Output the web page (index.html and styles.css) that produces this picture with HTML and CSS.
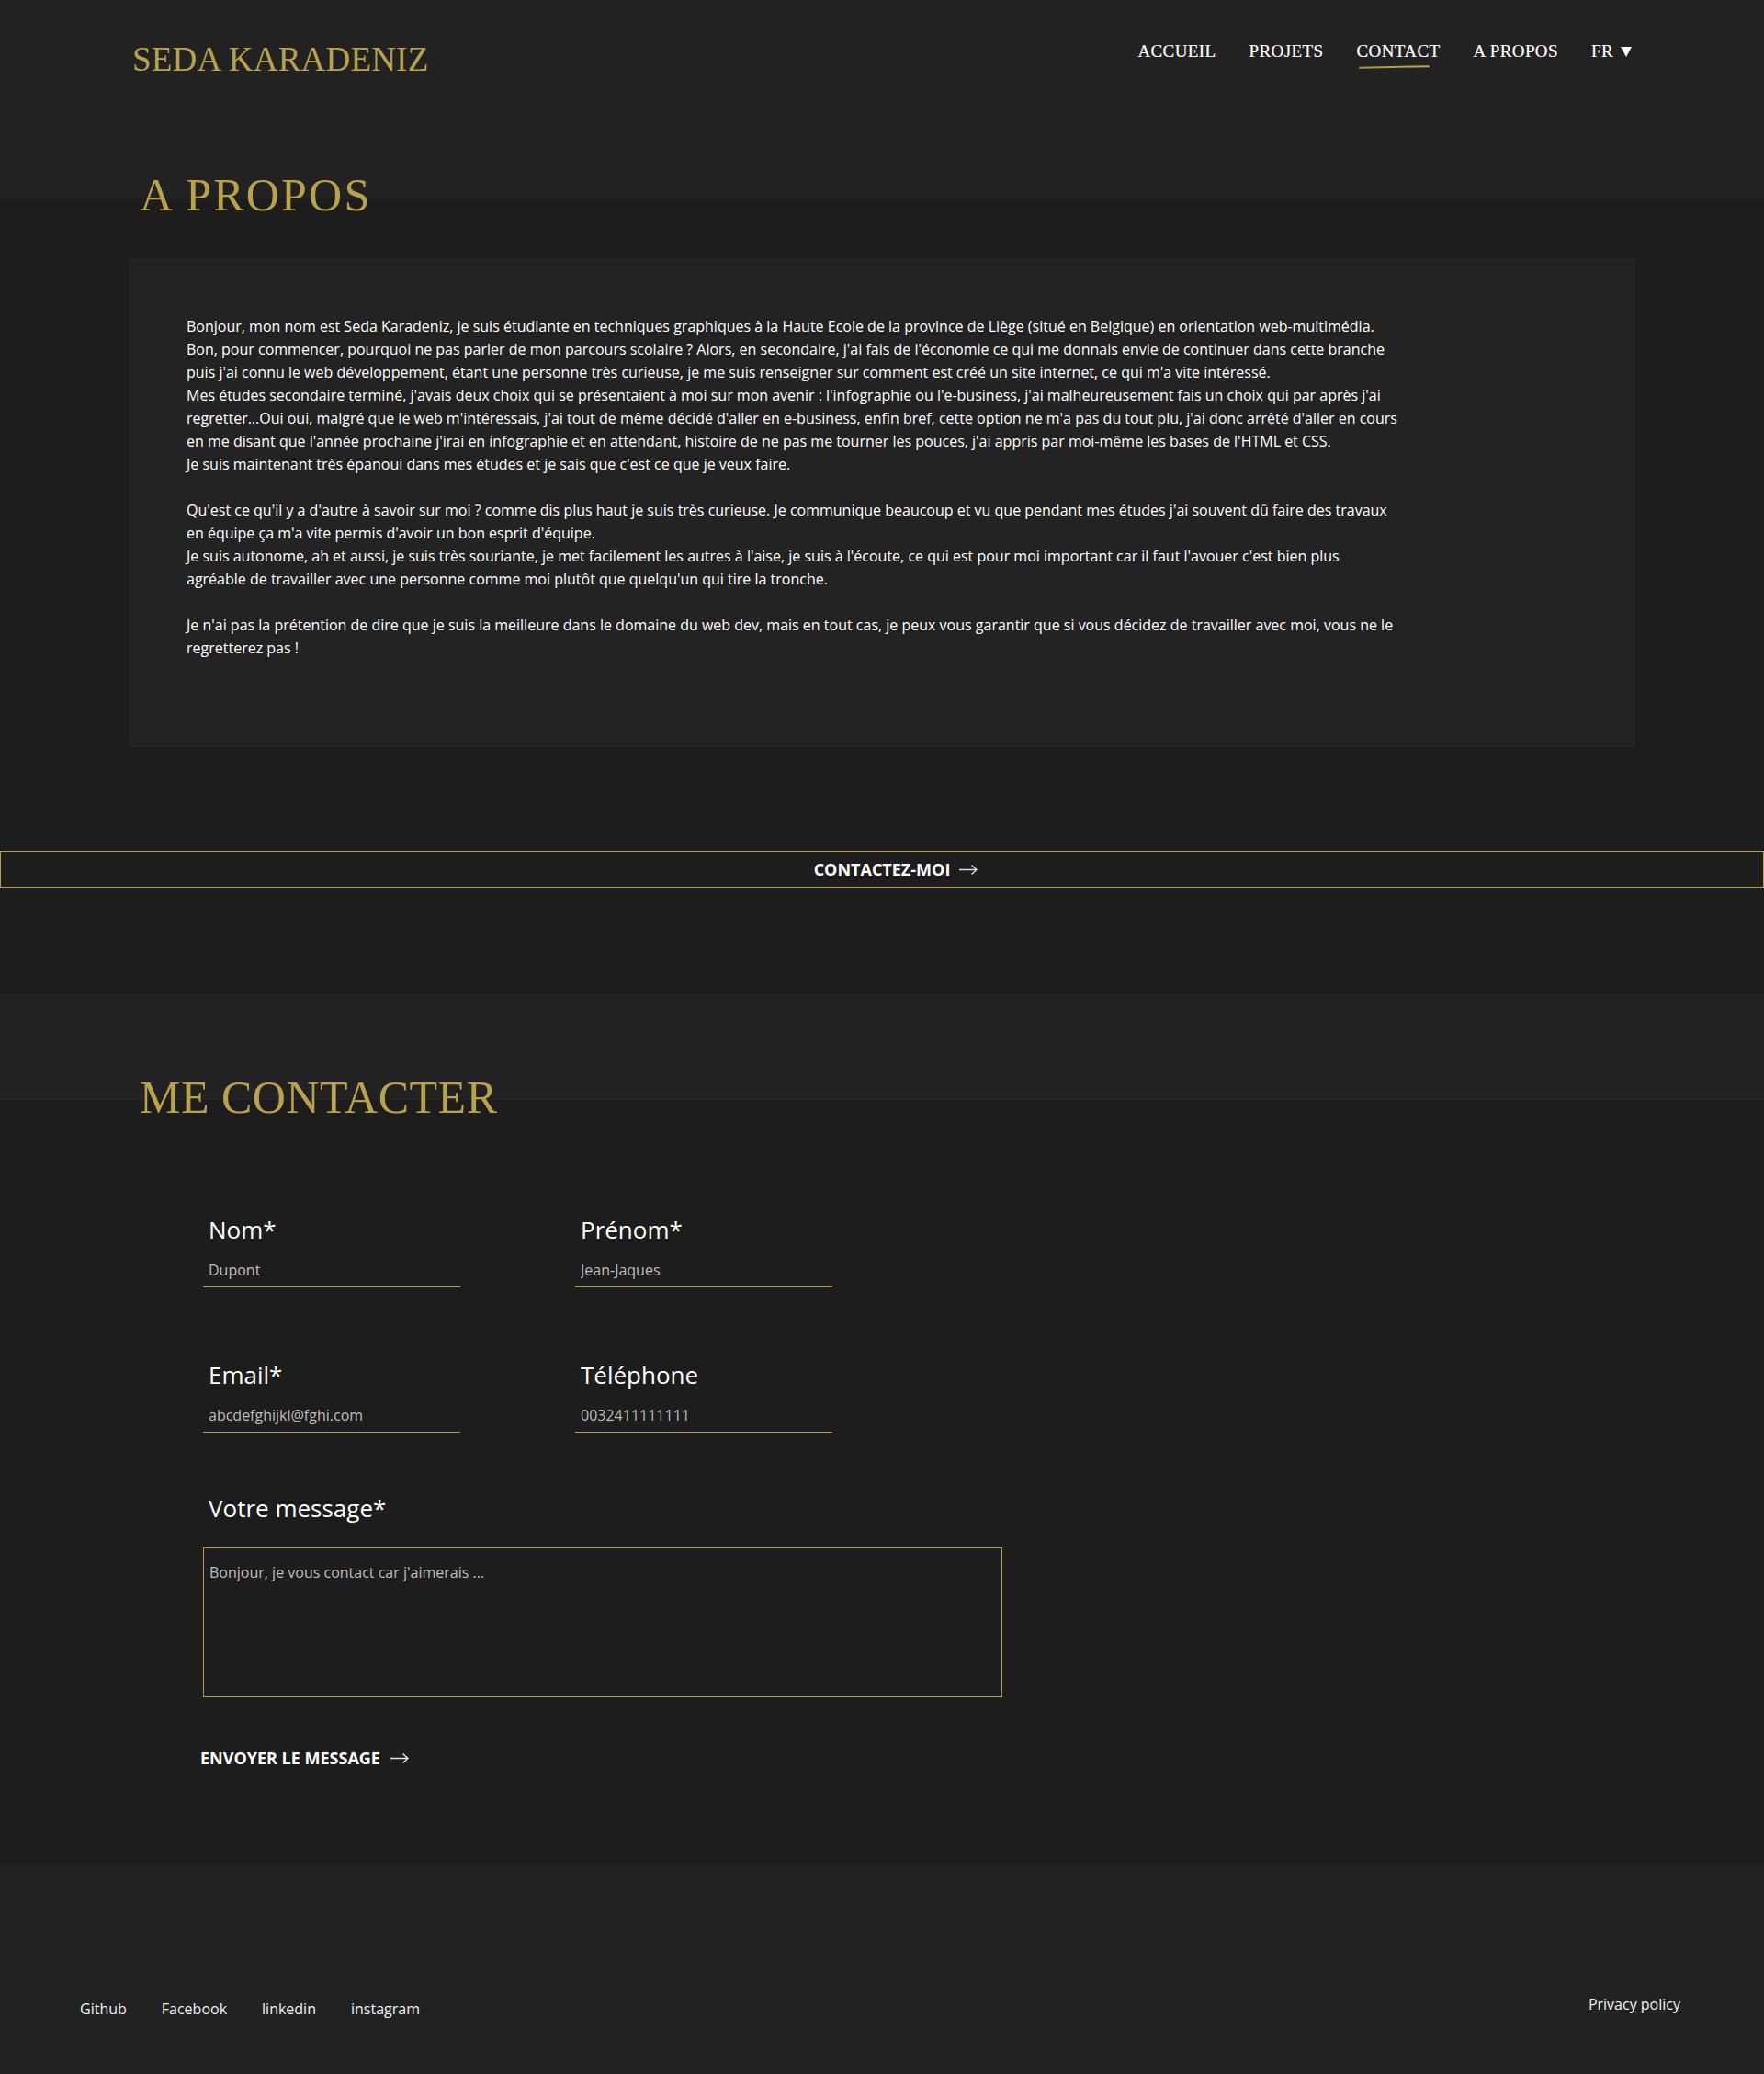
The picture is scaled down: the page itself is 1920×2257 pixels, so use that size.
FILE: index.html
```html
<!DOCTYPE html>
<html lang="fr">
<head>
<meta charset="utf-8">
<title>Seda Karadeniz - A propos</title>
<link rel="stylesheet" href="styles.css">
</head>
<body>
<header class="site-header">
  <a class="logo" href="#">SEDA KARADENIZ</a>
  <nav class="main-nav">
    <a class="nav-link" href="#">ACCUEIL</a>
    <a class="nav-link" href="#">PROJETS</a>
    <a class="nav-link active" href="#">CONTACT</a>
    <a class="nav-link" href="#">A PROPOS</a>
    <a class="nav-link lang" href="#">FR<svg class="lang-caret" width="12" height="11" viewBox="0 0 12 11"><polygon points="0,0 12,0 6,11" fill="#ffffff"/></svg></a>
  </nav>
</header>

<main>
  <section class="about">
    <h2 class="section-title about-title">A PROPOS</h2>
    <div class="about-box">
      <p>Bonjour, mon nom est Seda Karadeniz, je suis étudiante en techniques graphiques à la Haute Ecole de la province de Liège (situé en Belgique) en orientation web-multimédia.<br>Bon, pour commencer, pourquoi ne pas parler de mon parcours scolaire ? Alors, en secondaire, j'ai fais de l'économie ce qui me donnais envie de continuer dans cette branche puis j'ai connu le web développement, étant une personne très curieuse, je me suis renseigner sur comment est créé un site internet, ce qui m'a vite intéressé.<br>Mes études secondaire terminé, j'avais deux choix qui se présentaient à moi sur mon avenir : l'infographie ou l'e-business, j'ai malheureusement fais un choix qui par après j'ai regretter...Oui oui, malgré que le web m'intéressais, j'ai tout de même décidé d'aller en e-business, enfin bref, cette option ne m'a pas du tout plu, j'ai donc arrêté d'aller en cours en me disant que l'année prochaine j'irai en infographie et en attendant, histoire de ne pas me tourner les pouces, j'ai appris par moi-même les bases de l'HTML et CSS.<br>Je suis maintenant très épanoui dans mes études et je sais que c'est ce que je veux faire.</p>
      <p>Qu'est ce qu'il y a d'autre à savoir sur moi ? comme dis plus haut je suis très curieuse. Je communique beaucoup et vu que pendant mes études j'ai souvent dû faire des travaux en équipe ça m'a vite permis d'avoir un bon esprit d'équipe.<br>Je suis autonome, ah et aussi, je suis très souriante, je met facilement les autres à l'aise, je suis à l'écoute, ce qui est pour moi important car il faut l'avouer c'est bien plus agréable de travailler avec une personne comme moi plutôt que quelqu'un qui tire la tronche.</p>
      <p>Je n'ai pas la prétention de dire que je suis la meilleure dans le domaine du web dev, mais en tout cas, je peux vous garantir que si vous décidez de travailler avec moi, vous ne le regretterez pas !</p>
    </div>
  </section>

  <a class="contact-bar" href="#contact">
    <span class="cta-text">CONTACTEZ-MOI</span><svg class="arrow cta-arrow" width="20" height="12" viewBox="0 0 20 12"><path d="M0 6.5 H19 M13.5 1.5 L19 6.5 L13.5 11.5" fill="none" stroke="#dddddd" stroke-width="1.4"/></svg>
  </a>

  <section class="contact" id="contact">
    <div class="contact-band"></div>
    <h2 class="section-title contact-title">ME CONTACTER</h2>
    <form class="contact-form">
      <div class="field-grid">
        <div class="field">
          <label class="field-label" for="nom">Nom*</label>
          <input class="field-input" id="nom" type="text" placeholder="Dupont">
        </div>
        <div class="field">
          <label class="field-label" for="prenom">Prénom*</label>
          <input class="field-input" id="prenom" type="text" placeholder="Jean-Jaques">
        </div>
        <div class="field">
          <label class="field-label" for="email">Email*</label>
          <input class="field-input" id="email" type="email" placeholder="abcdefghijkl@fghi.com">
        </div>
        <div class="field">
          <label class="field-label" for="tel">Téléphone</label>
          <input class="field-input" id="tel" type="tel" placeholder="0032411111111">
        </div>
      </div>
      <div class="field message-field">
        <label class="field-label message-label" for="message">Votre message*</label>
        <textarea class="field-textarea" id="message" placeholder="Bonjour, je vous contact car j'aimerais ..."></textarea>
      </div>
      <button class="send-btn" type="button">ENVOYER LE MESSAGE<svg class="arrow" width="20" height="12" viewBox="0 0 20 12"><path d="M0 6.5 H19 M13.5 1.5 L19 6.5 L13.5 11.5" fill="none" stroke="#e6e6e6" stroke-width="1.4"/></svg></button>
    </form>
  </section>
</main>

<footer class="site-footer">
  <div class="socials">
    <a href="#">Github</a>
    <a href="#">Facebook</a>
    <a href="#">linkedin</a>
    <a href="#">instagram</a>
  </div>
  <a class="privacy" href="#">Privacy policy</a>
</footer>
</body>
</html>
```

FILE: styles.css
```css
html, body {
  margin: 0;
  padding: 0;
}

body {
  background: #1d1d1d;
  color: #ffffff;
  font-family: "Open Sans", "Liberation Sans", sans-serif;
}

a {
  color: inherit;
  text-decoration: none;
}

/* ---------- Header ---------- */
.site-header {
  height: 187px;
  box-sizing: border-box;
  padding: 46px 144px 0;
  background: #222222;
  display: flex;
  justify-content: space-between;
  align-items: flex-start;
}

.logo {
  font-family: "Liberation Serif", "Times New Roman", serif;
  font-size: 37px;
  line-height: 37px;
  color: #b8a34b;
  letter-spacing: 0.2px;
}

.main-nav {
  display: flex;
  gap: 36px;
  align-items: flex-start;
}

.nav-link {
  position: relative;
  font-family: "Liberation Serif", "Times New Roman", serif;
  font-size: 19px;
  line-height: 19px;
  letter-spacing: 0.4px;
  color: #ffffff;
  -webkit-text-stroke: 0.2px #ffffff;
}

.nav-link.active::after {
  content: "";
  position: absolute;
  left: 2px;
  top: 26px;
  width: 77px;
  height: 2px;
  border-radius: 1px;
  background: linear-gradient(90deg, #a89540, #bfa94c);
  transform: rotate(-1.2deg);
}

.lang {
  display: flex;
  align-items: flex-end;
}

.lang-caret {
  margin-left: 8px;
  margin-bottom: 3px;
}

/* ---------- Section titles ---------- */
.section-title {
  margin: 0;
  padding-left: 152px;
  font-family: "Liberation Serif", "Times New Roman", serif;
  font-weight: normal;
  font-size: 50px;
  line-height: 50px;
  color: #b8a34b;
}

.about-title {
  background: linear-gradient(#222222 0 30px, transparent 30px);
  letter-spacing: 2.2px;
}

.contact-title {
  background: linear-gradient(#222222 0 28px, transparent 28px);
  letter-spacing: 0.5px;
}

/* ---------- About ---------- */
.about-box {
  width: 1640px;
  box-sizing: border-box;
  margin: 44px auto 0;
  padding: 62px 63px 95px;
  background: #232323;
}

.about-box p {
  max-width: 1322px;
  margin: 0 0 25px;
  font-size: 16px;
  line-height: 25px;
  color: #ffffff;
}

.about-box p:last-child {
  margin-bottom: 0;
}

/* ---------- Contact bar ---------- */
.contact-bar {
  margin-top: 113px;
  height: 40px;
  box-sizing: border-box;
  border: 1px solid #b59f42;
  display: flex;
  justify-content: center;
  align-items: center;
  font-size: 18px;
  line-height: 24px;
  font-weight: 700;
  color: #ffffff;
}

.arrow {
  display: block;
  margin-left: 11px;
}

.cta-arrow {
  margin-left: 10px;
  margin-right: -30px;
}

/* ---------- Contact ---------- */
.contact {
  margin-top: 116px;
}

.contact-band {
  height: 87px;
  background: #222222;
}

.contact-form {
  padding: 101px 0 0 221px;
}

.field-grid {
  display: grid;
  grid-template-columns: 280px 280px;
  column-gap: 125px;
  row-gap: 77px;
}

.field {
  display: flex;
  flex-direction: column;
}

.field-label {
  font-size: 26px;
  line-height: 36px;
  color: #ffffff;
  padding-left: 6px;
  margin-bottom: 8px;
}

.field-input {
  width: 280px;
  box-sizing: border-box;
  padding: 7px 6px;
  border: none;
  border-bottom: 1px solid #b59f42;
  background: transparent;
  font-family: "Open Sans", "Liberation Sans", sans-serif;
  font-size: 16px;
  line-height: 22px;
  color: #ffffff;
  outline: none;
}

.field-input::placeholder,
.field-textarea::placeholder {
  color: #bdbdbd;
  opacity: 1;
}

.message-field {
  margin-top: 64px;
}

.message-label {
  margin-bottom: 25px;
}

.field-textarea {
  width: 870px;
  height: 163px;
  box-sizing: border-box;
  padding: 15px 6px;
  border: 1px solid #b59f42;
  background: transparent;
  font-family: "Open Sans", "Liberation Sans", sans-serif;
  font-size: 16px;
  line-height: 22px;
  color: #ffffff;
  resize: none;
  outline: none;
}

.send-btn {
  margin: 54px 0 0 -3px;
  padding: 0;
  border: none;
  background: none;
  display: flex;
  align-items: center;
  font-family: "Open Sans", "Liberation Sans", sans-serif;
  font-size: 18px;
  line-height: 24px;
  font-weight: 700;
  color: #ffffff;
  cursor: pointer;
}

/* ---------- Footer ---------- */
.site-footer {
  margin-top: 103px;
  height: 229px;
  box-sizing: border-box;
  padding: 142px 91px 0 87px;
  background: #222222;
  display: flex;
  justify-content: space-between;
  align-items: flex-start;
}

.socials {
  display: flex;
  gap: 38px;
  padding-top: 5px;
}

.socials a,
.privacy {
  font-size: 16px;
  line-height: 22px;
  color: #f2f2f2;
}

.privacy {
  text-decoration: underline;
  text-underline-offset: 2px;
}
```
